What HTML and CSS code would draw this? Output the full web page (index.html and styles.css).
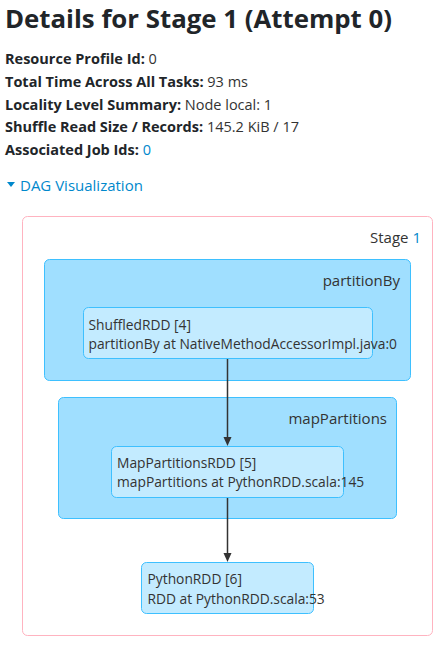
FILE: index.html
```html
<!DOCTYPE html>
<html lang="en">

<head>
    <meta charset="UTF-8">
    <meta name="viewport" content="width=device-width, initial-scale=1.0">
    <title>Details for Stage 1 (Attempt 0)</title>
    <link rel="stylesheet" href="styles.css">
</head>

<body>
    <div class="page">
        <h3 class="stage-title">Details for Stage 1 (Attempt 0)</h3>

        <!-- 汇总信息 -->
        <ul class="summary">
            <li><strong>Resource Profile Id:</strong> 0</li>
            <li><strong>Total Time Across All Tasks:</strong> 93 ms</li>
            <li><strong>Locality Level Summary:</strong> Node local: 1</li>
            <li><strong>Shuffle Read Size / Records:</strong> 145.2 KiB / 17</li>
            <li><strong>Associated Job Ids:</strong> <a href="javascript:;">0</a></li>
        </ul>

        <a class="expand-dag" href="javascript:;"><span class="arrow-open"></span>DAG Visualization</a>
    </div>

    <!-- DAG 图 -->
    <div id="dag-viz-graph">
        <svg class="stage" width="442" height="440" viewBox="0 205 442 440">
            <g class="cluster stage">
                <rect x="22.5" y="216.5" width="410" height="419" rx="5" ry="5"></rect>
                <text x="421" y="243" text-anchor="end">Stage <tspan class="stage-link">1</tspan></text>
            </g>

            <g class="cluster">
                <rect x="44.5" y="259.5" width="366" height="121" rx="5" ry="5"></rect>
                <text x="400" y="286" text-anchor="end">partitionBy</text>
            </g>
            <g class="cluster">
                <rect x="58.5" y="397.5" width="338" height="121" rx="5" ry="5"></rect>
                <text x="387" y="424" text-anchor="end">mapPartitions</text>
            </g>

            <g class="node">
                <rect x="83.5" y="307.5" width="289" height="51" rx="5" ry="5"></rect>
                <text x="88.5" y="329.5">ShuffledRDD [4]</text>
                <text x="88.5" y="349">partitionBy at NativeMethodAccessorImpl.java:0</text>
            </g>
            <g class="node">
                <rect x="111.5" y="446.5" width="232" height="51" rx="5" ry="5"></rect>
                <text x="117" y="467.5">MapPartitionsRDD [5]</text>
                <text x="117" y="486.5">mapPartitions at PythonRDD.scala:145</text>
            </g>
            <g class="node">
                <rect x="141.5" y="562.5" width="172" height="51" rx="5" ry="5"></rect>
                <text x="147.5" y="584">PythonRDD [6]</text>
                <text x="147.5" y="603.5">RDD at PythonRDD.scala:53</text>
            </g>

            <!-- 连线 -->
            <g class="edge">
                <path d="M227.5 359 L227.5 438"></path>
                <polygon points="223.5,437 231.5,437 227.5,446"></polygon>
            </g>
            <g class="edge">
                <path d="M227.5 498 L227.5 554"></path>
                <polygon points="223.5,553 231.5,553 227.5,562"></polygon>
            </g>
        </svg>
    </div>
</body>

</html>
```

FILE: styles.css
```css
* {
    margin: 0;
    padding: 0;
    box-sizing: border-box;
}

body {
    font-family: "Open Sans", "Noto Sans", sans-serif;
    color: #212529;
    background-color: #fff;
}

a {
    color: #0088cc;
    text-decoration: none;
}

.page {
    padding: 0 5px;
}

.stage-title {
    font-size: 25.8px;
    font-weight: 700;
    line-height: 30px;
    padding-top: 3px;
}

.summary {
    list-style: none;
    margin-top: 15px;
    font-size: 14.5px;
    line-height: 22.75px;
    color: #333;
}

.summary strong {
    color: #212529;
}

.expand-dag {
    display: inline-flex;
    align-items: center;
    margin-top: 13px;
    margin-left: 2px;
    font-size: 15px;
    line-height: 20px;
}

.arrow-open {
    width: 0;
    height: 0;
    border-left: 4px solid transparent;
    border-right: 4px solid transparent;
    border-top: 5px solid #0088cc;
    margin-right: 5px;
}

#dag-viz-graph {
    position: absolute;
    top: 205px;
    left: 0;
}

#dag-viz-graph svg {
    display: block;
    font-family: "Open Sans", "Noto Sans", sans-serif;
}

#dag-viz-graph text {
    fill: #333;
    font-size: 13.8px;
}

#dag-viz-graph .cluster text {
    font-size: 15px;
}

#dag-viz-graph .stage-link {
    fill: #0088cc;
}

#dag-viz-graph .cluster rect {
    fill: #A0DFFF;
    stroke: #3EC0FF;
    stroke-width: 1px;
}

#dag-viz-graph .cluster.stage rect {
    fill: #fff;
    stroke: #FFB3C0;
}

#dag-viz-graph .node rect {
    fill: #C3EBFF;
    stroke: #3EC0FF;
    stroke-width: 1px;
}

#dag-viz-graph .edge path {
    stroke: #333;
    stroke-width: 1.5px;
    fill: none;
}

#dag-viz-graph .edge polygon {
    fill: #333;
}
```
